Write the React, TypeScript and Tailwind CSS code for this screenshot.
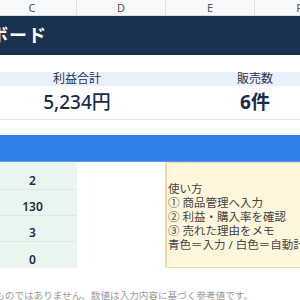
export default function App() {
  const cols = ["C", "D", "E", "F"];
  const counts = [
    { v: "2", h: "h-[27px]" },
    { v: "130", h: "h-[26px]" },
    { v: "3", h: "h-[26px]" },
    { v: "0", h: "h-[27px]" },
  ];
  return (
    <div className="w-[300px] h-[300px] overflow-hidden bg-white font-['Noto_Sans','Noto_Sans_CJK_JP',sans-serif]">
      <div className="-ml-[12px] w-[356px]">
        {/* column letters */}
        <div className="grid grid-cols-[89px_89px_89px_89px] h-[16px] bg-[#f8f9fa] border-b border-[#dadce0]">
          {cols.map((c) => (
            <div key={c} className="flex items-center justify-center border-r border-[#e3e3e3] text-[11px] leading-none text-[#555]">
              {c}
            </div>
          ))}
        </div>

        {/* title */}
        <div className="h-[39px] bg-[#1a3152] flex items-center">
          <div className="w-[59px] flex justify-end">
            <span className="whitespace-nowrap text-[18px] font-bold text-white tracking-[1px]">販売ダッシュボード</span>
          </div>
        </div>

        <div className="h-[17px]" />

        {/* summary */}
        <div className="grid grid-cols-[178px_178px] h-[14px] bg-[#e8f1fc] text-[12px] leading-[14px] text-[#2a3550]">
          <div className="text-center">利益合計</div>
          <div className="text-center">販売数</div>
        </div>
        <div className="grid grid-cols-[178px_178px] h-[34px] border-b border-[#e8e8e8] text-[#1d2b4a]">
          <div className="flex items-center justify-center text-[19px] font-medium">5,234円</div>
          <div className="flex items-center justify-center text-[19px] font-bold">6件</div>
        </div>

        <div className="h-[15px]" />
        <div className="h-[27px] bg-[#2f80e8] border-b border-[#5a9af0]" />

        {/* body */}
        <div className="grid grid-cols-[89px_88px_179px] h-[106px]">
          <div className="flex flex-col bg-[#e9f6ef]">
            {counts.map((r, i) => (
              <div
                key={i}
                className={`${r.h} flex items-end justify-center pb-[1px] text-[12px] leading-[15px] font-semibold text-[#1d2b4a] ${i > 0 ? "border-t border-[#dbe9e1]" : ""}`}
              >
                {r.v}
              </div>
            ))}
          </div>
          <div />
          <div className="bg-[#fff6de] border border-l-2 border-[#f2dc9c] pt-[19px] pl-[1px] text-[11.5px] leading-[14px] text-[#444] whitespace-nowrap">
            <div>使い方</div>
            <div>① 商品管理へ入力</div>
            <div>② 利益・購入率を確認</div>
            <div>③ 売れた理由をメモ</div>
            <div>青色＝入力 / 白色＝自動計算</div>
          </div>
        </div>

        {/* footer */}
        <div className="mt-[22px] w-[265px] flex justify-end">
          <span className="whitespace-nowrap text-[9.6px] leading-[12px] text-[#9a9a9a]">
            ※本ツールは利益を保証するものではありません。数値は入力内容に基づく参考値です。
          </span>
        </div>
      </div>
    </div>
  );
}
